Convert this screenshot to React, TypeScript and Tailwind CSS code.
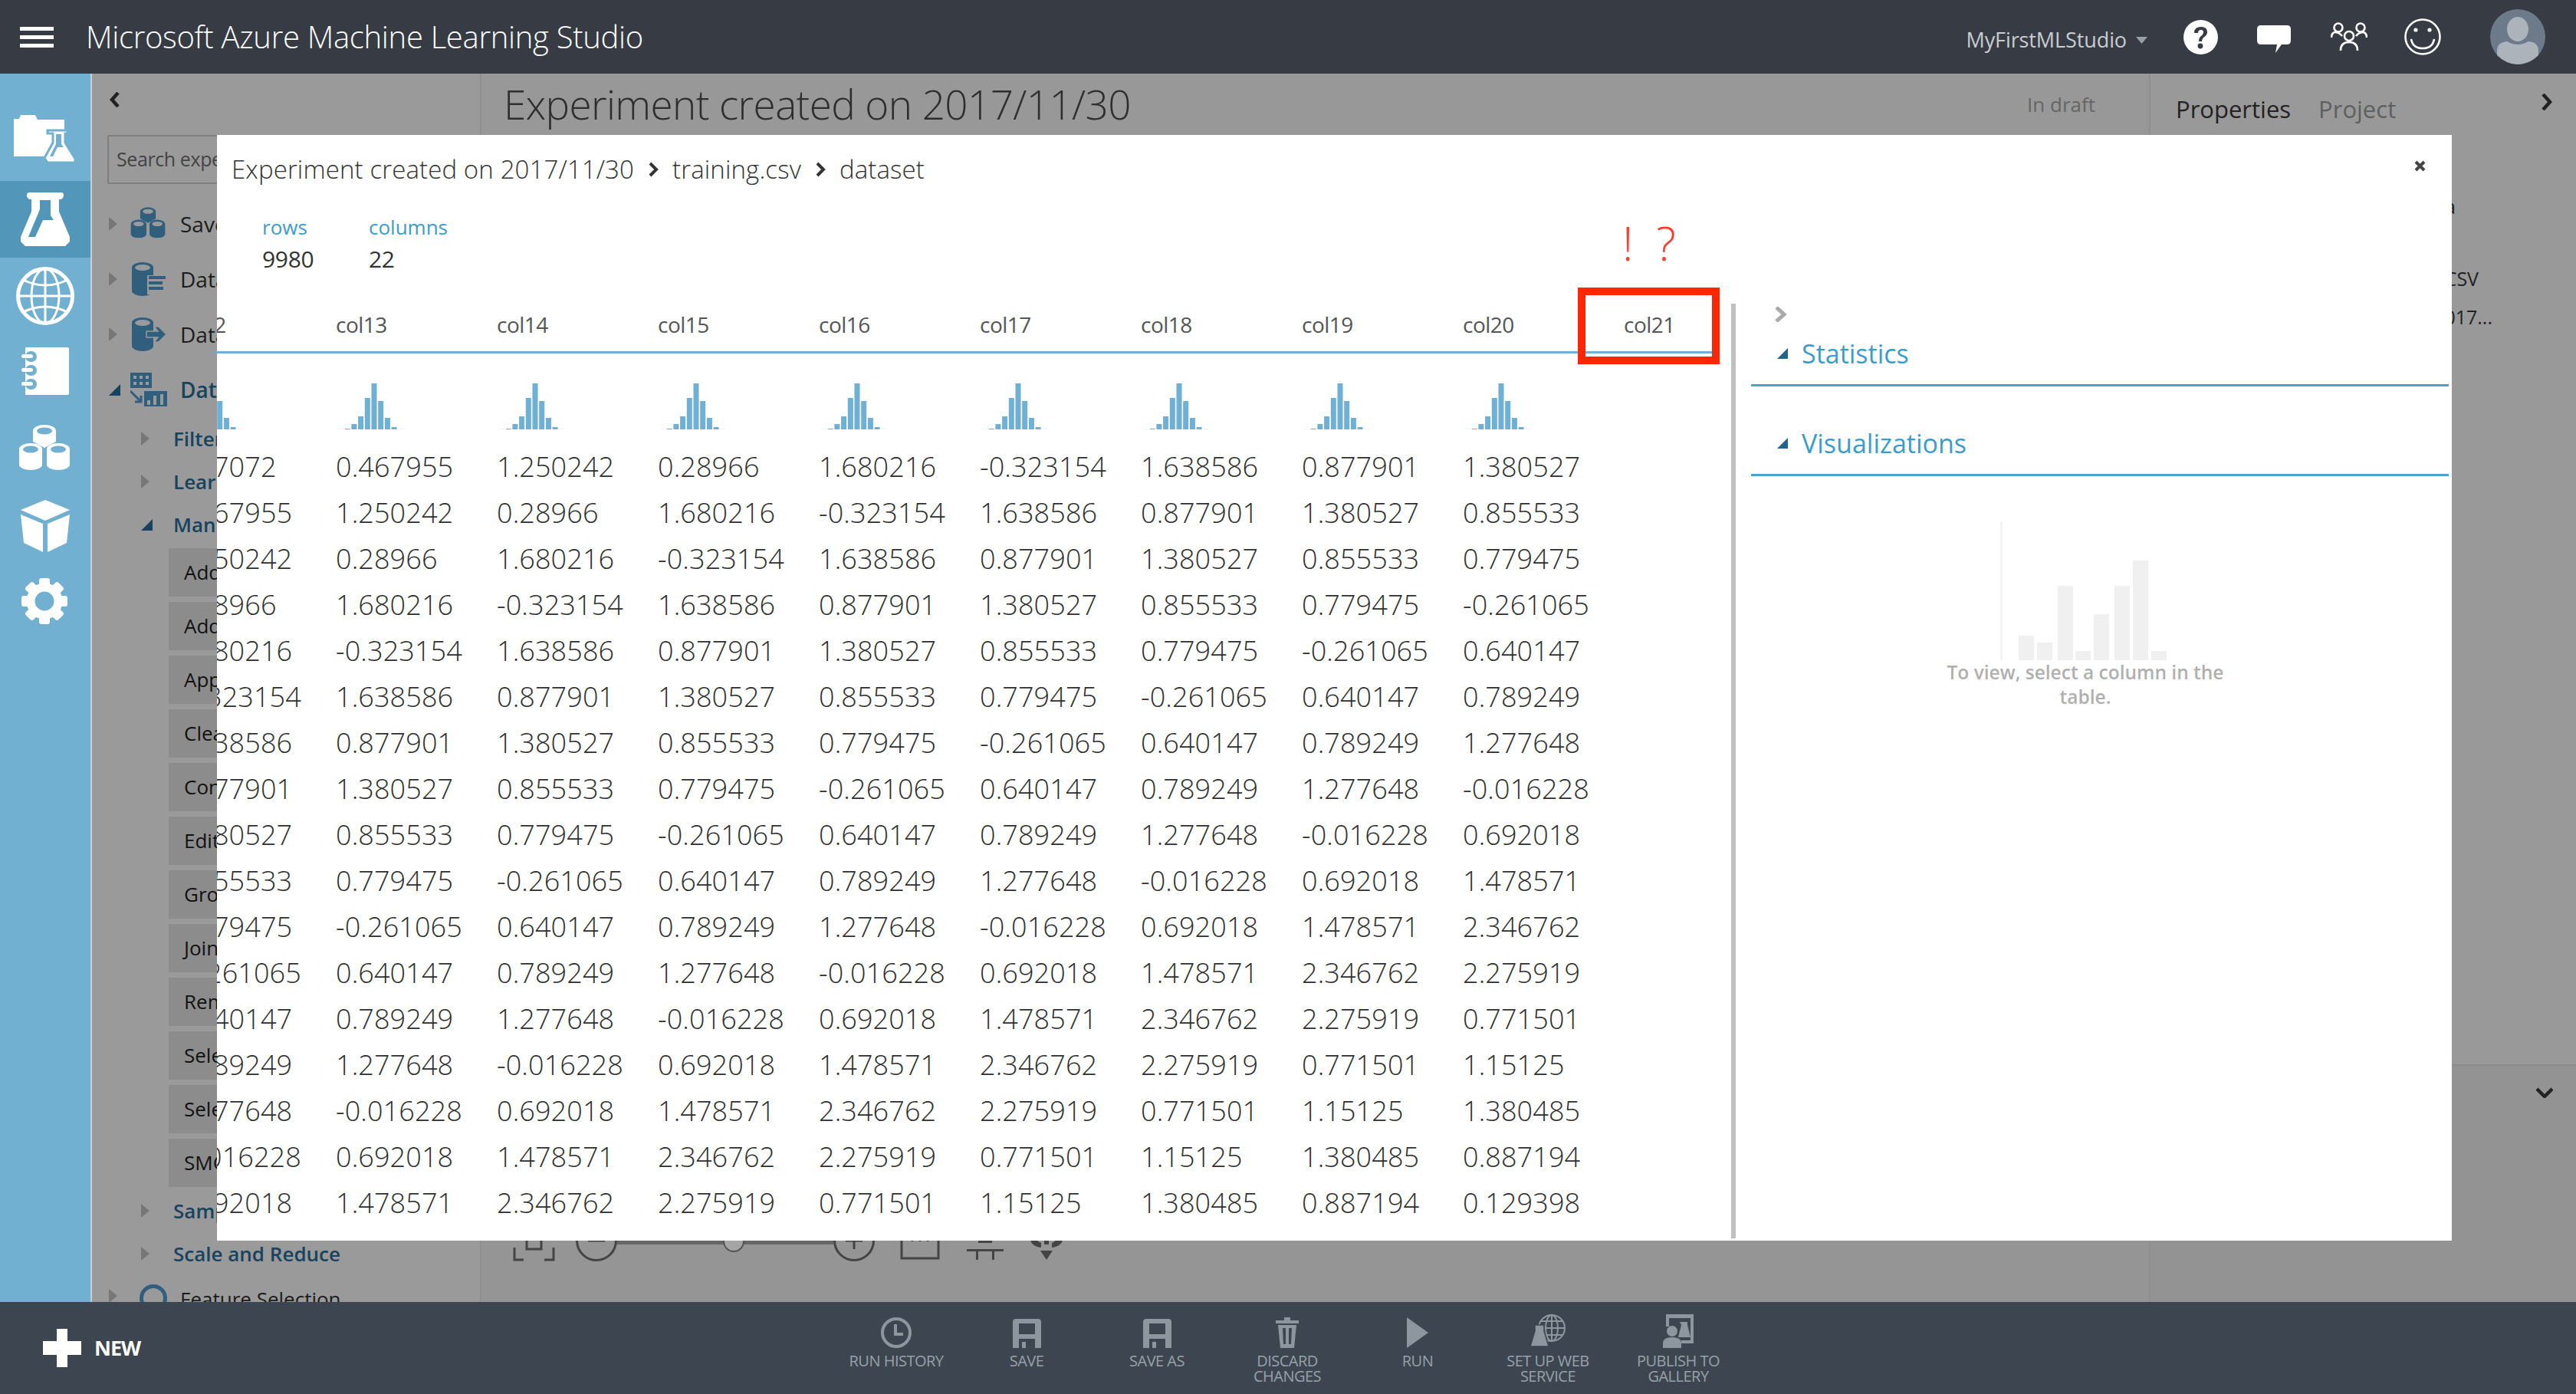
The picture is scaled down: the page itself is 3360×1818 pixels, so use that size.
import type { ReactNode } from "react";

const series = [
  "0.27072", "0.467955", "1.250242", "0.28966", "1.680216", "-0.323154", "1.638586", "0.877901", "1.380527",
  "0.855533", "0.779475", "-0.261065", "0.640147", "0.789249", "1.277648", "-0.016228", "0.692018", "1.478571",
  "2.346762", "2.275919", "0.771501", "1.15125", "1.380485", "0.887194", "0.129398",
];
const columns = ["col12", "col13", "col14", "col15", "col16", "col17", "col18", "col19", "col20"];
const rowIndexes = Array.from({ length: 17 }, (_, i) => i);
const histBars = [0.4, 1, 7, 17, 41, 60, 37, 15, 3, 0.5];
const moduleItems = [
  "Add Columns", "Add Rows", "Apply SQL Transformation", "Clean Missing Data", "Convert to Indicator Values",
  "Edit Metadata", "Group Categorical Values", "Join Data", "Remove Duplicate Rows", "Select Columns in Dataset",
  "Select Columns Transform", "SMOTE",
];

function Histogram() {
  return (
    <svg width="90" height="60" viewBox="0 0 90 60" className="block">
      {histBars.map((h, i) => (
        <rect key={i} x={i * 8.7 + 1} y={60 - h} width="7" height={h} fill={h < 1 ? "#d5e7f1" : "#6fb0d4"} />
      ))}
    </svg>
  );
}

function RightTri() {
  return (
    <svg width="11" height="18" viewBox="0 0 11 18" className="block">
      <path d="M0 0 L11 9 L0 18 Z" fill="#777" />
    </svg>
  );
}

function OpenTri({ color = "#17435e", size = 15 }: { color?: string; size?: number }) {
  return (
    <svg width={size} height={size} viewBox="0 0 15 15" className="block">
      <path d="M15 0 V15 H0 Z" fill={color} />
    </svg>
  );
}

function CylinderIcons({ fill, hole, className }: { fill: string; hole: string; className?: string }) {
  const cyl = (x: number, y: number, key: string) => (
    <g key={key}>
      <path d={`M${x} ${y} a15 8 0 0 1 30 0 v20 a15 7 0 0 1 -30 0 Z`} fill={fill} />
      <ellipse cx={x + 15} cy={y} rx="10" ry="4.5" fill={hole} />
    </g>
  );
  return (
    <svg viewBox="0 0 66 68" className={className}>
      <path d="M18 10 a15 8 0 0 1 30 0 v14 l-15 8 l-15 -8 Z" fill={fill} />
      <ellipse cx="33" cy="10" rx="10" ry="4.5" fill={hole} />
      {cyl(0, 34, "a")}
      {cyl(36, 34, "b")}
    </svg>
  );
}

function FolderFlaskIcon() {
  return (
    <svg width="80" height="62" viewBox="0 0 80 62" className="block">
      <path d="M0 5 L7 5 L9 0 L28 0 L31 6 L66 6 L66 54 L0 54 Z" fill="#fff" />
      <path d="M44 20 H70 V24 H67 V36 L80 57 V62 H44 L40 56 L51 36 V24 H44 Z" fill="#fff" stroke="#72b0d2" strokeWidth="3" />
      <path d="M55 25 H62 V38 L65 42 H57 L51 54 H47 L55 38 Z" fill="#72b0d2" />
    </svg>
  );
}

function FlaskIcon() {
  return (
    <svg width="64" height="70" viewBox="0 0 64 70" className="block">
      <path d="M11 0 H53 Q56 0 56 4 Q56 9 50 9 V25 L64 58 V64 L58 70 H6 L0 64 V58 L14 25 V9 Q8 9 8 4 Q8 0 11 0 Z" fill="#fff" />
      <path d="M25 10 H39 V30 L43 36 H29 L19 58 H10 L25 22 Z" fill="#5296ba" />
    </svg>
  );
}

function GlobeIcon() {
  return (
    <svg width="78" height="78" viewBox="0 0 78 78" fill="none" stroke="#fff" className="block">
      <circle cx="39" cy="39" r="35.5" strokeWidth="5" />
      <ellipse cx="39" cy="39" rx="18" ry="35.5" strokeWidth="3" />
      <path d="M39 4 V74 M4 39 H74" strokeWidth="3" />
      <path d="M10 18 Q39 32 68 18 M10 60 Q39 46 68 60" strokeWidth="3" />
    </svg>
  );
}

function NotebookIcon() {
  return (
    <svg width="62" height="62" viewBox="0 0 62 62" className="block">
      <path d="M5 0 H60 Q62 0 62 2 V60 Q62 62 60 62 H5 V0 Z" fill="#fff" />
      {[11, 29, 47].map((y) => (
        <g key={y}>
          <rect x="5" y={y - 6} width="15" height="14" rx="7" fill="#72b0d2" />
          <rect x="0" y={y - 2} width="15" height="5" rx="2.5" fill="#fff" />
        </g>
      ))}
    </svg>
  );
}

function CubeIcon() {
  return (
    <svg width="64" height="68" viewBox="0 0 64 68" fill="#fff" className="block">
      <path d="M32 0 L64 13 L32 27 L0 13 Z" />
      <path d="M0 19 L29 31 V68 L4 56 Z M64 19 L35 31 V68 L60 56 Z" />
    </svg>
  );
}

function GearIcon() {
  const teeth = [0, 45, 90, 135, 180, 225, 270, 315];
  return (
    <svg width="60" height="60" viewBox="0 0 60 60" className="block">
      {teeth.map((a) => (
        <rect key={a} x="23" y="0" width="14" height="14" rx="3" fill="#fff" transform={`rotate(${a} 30 30)`} />
      ))}
      <circle cx="30" cy="30" r="18" fill="none" stroke="#fff" strokeWidth="11" />
    </svg>
  );
}

function DbListIcon({ arrow }: { arrow?: boolean }) {
  return (
    <svg width="48" height="44" viewBox="0 0 48 44" className="block">
      <path d="M2 7 a14 7 0 0 1 28 0 v30 a14 7 0 0 1 -28 0 Z" fill="#2f5f7c" />
      <ellipse cx="16" cy="7" rx="10" ry="4" fill="#9a9a9a" />
      {arrow ? (
        <path d="M21 18 H36 L31 12 H37 L47 22 L37 32 H31 L36 26 H21 Z" fill="#2f5f7c" stroke="#9a9a9a" strokeWidth="1.5" />
      ) : (
        <g>
          <rect x="22" y="17" width="24" height="25" fill="#9a9a9a" />
          <rect x="24" y="18" width="22" height="4" fill="#2f5f7c" />
          <rect x="24" y="25" width="18" height="4" fill="#2f5f7c" />
          <rect x="24" y="32" width="19" height="4" fill="#2f5f7c" />
        </g>
      )}
    </svg>
  );
}

function TransformIcon() {
  return (
    <svg width="48" height="44" viewBox="0 0 48 44" className="block">
      <rect x="0" y="0" width="28" height="20" fill="#2f5f7c" />
      {[4, 12, 20].map((x) => (
        <g key={x}>
          <rect x={x} y="4" width="4" height="4" fill="#9a9a9a" />
          <rect x={x} y="12" width="4" height="4" fill="#9a9a9a" />
        </g>
      ))}
      <path d="M0 24 L14 38 M14 30 V38 H6" stroke="#2f5f7c" strokeWidth="3" fill="none" />
      <rect x="18" y="24" width="30" height="20" fill="#2f5f7c" />
      <rect x="22" y="36" width="4" height="6" fill="#9a9a9a" />
      <rect x="30" y="30" width="4" height="12" fill="#9a9a9a" />
      <rect x="39" y="28" width="4" height="14" fill="#9a9a9a" />
    </svg>
  );
}

function PaletteRow({ icon, label, strong, open }: { icon: ReactNode; label: string; strong?: boolean; open?: boolean }) {
  return (
    <div className="flex h-[72px] shrink-0 items-center pl-[22px]">
      <div className="flex w-[28px] justify-start">{open ? <OpenTri /> : <RightTri />}</div>
      <div className="flex w-[65px] justify-start">{icon}</div>
      <span className={strong ? "whitespace-nowrap text-[28px] font-semibold text-[#17435e]" : "whitespace-nowrap text-[28px] text-[#1c1c1c]"}>
        {label}
      </span>
    </div>
  );
}

function SubRow({ label, open }: { label: string; open?: boolean }) {
  return (
    <div className="flex h-[56px] shrink-0 items-center pl-[64px]">
      <div className="flex w-[42px]">{open ? <OpenTri /> : <RightTri />}</div>
      <span className="whitespace-nowrap text-[26px] font-semibold text-[#17435e]">{label}</span>
    </div>
  );
}

function ToolIcon({ label, lines, children }: { label?: string; lines?: string[]; children: ReactNode }) {
  return (
    <div className="flex w-[170px] flex-col items-center">
      <div className="flex h-[48px] w-full items-end justify-center">{children}</div>
      <div className="mt-[7px] text-center text-[20px] leading-[20px] tracking-[-0.5px] text-[#97a1a9]">
        {label ? <div>{label}</div> : null}
        {lines?.map((l) => <div key={l}>{l}</div>)}
      </div>
    </div>
  );
}

function FloppyIcon() {
  return (
    <svg width="37" height="38" viewBox="0 0 37 38" className="block">
      <path d="M4 0 H33 Q37 0 37 4 V38 H29 V26 H8 V38 H0 V4 Q0 0 4 0 Z M8 6 V20 H29 V6 Z" fill="#8d969e" fillRule="evenodd" />
      <rect x="12" y="30" width="5" height="8" fill="#8d969e" />
    </svg>
  );
}

export default function App() {
  return (
    <div className="relative flex h-[1818px] w-[3360px] flex-col overflow-hidden bg-[#999] font-['Open_Sans','Noto_Sans',sans-serif]">
      {/* top bar */}
      <header className="flex h-[96px] shrink-0 items-center bg-[#373c44]">
        <div className="ml-[26px] flex h-[27px] w-[44px] flex-col justify-between">
          <div className="h-[5px] bg-white" />
          <div className="h-[5px] bg-white" />
          <div className="h-[5px] bg-white" />
        </div>
        <span className="ml-[42px] text-[40px] font-light tracking-[-0.3px] text-white">Microsoft Azure Machine Learning Studio</span>
        <div className="ml-auto mr-[40px] flex items-center">
          <span className="mt-[8px] text-[27px] tracking-[-0.1px] text-[#c9ccd0]">MyFirstMLStudio</span>
          <svg width="15" height="9" viewBox="0 0 15 9" className="ml-[12px] mt-[8px]">
            <path d="M0 0 H15 L7.5 9 Z" fill="#9a9ea3" />
          </svg>
          <svg width="45" height="45" viewBox="0 0 45 45" className="ml-[47px]">
            <circle cx="22.5" cy="22.5" r="22.5" fill="#fff" />
            <path d="M14 17 Q14 9 23 9 Q31 9 31 16 Q31 20 26 23 Q24 25 24 28 H20 Q20 23 23 21 Q26 19 26 16 Q26 13 23 13 Q19 13 19 17 Z" fill="#373c44" />
            <circle cx="22" cy="34" r="3.4" fill="#373c44" />
          </svg>
          <svg width="44" height="36" viewBox="0 0 44 36" className="ml-[51px] mt-[6px]">
            <path d="M5 0 H39 Q44 0 44 5 V20 Q44 25 39 25 H32 L24 36 L26 25 H5 Q0 25 0 20 V5 Q0 0 5 0 Z" fill="#fff" />
          </svg>
          <svg width="48" height="38" viewBox="0 0 48 38" fill="none" stroke="#fff" strokeWidth="2.6" className="ml-[52px]">
            <circle cx="10" cy="7" r="5.5" />
            <circle cx="39" cy="7" r="5.5" />
            <circle cx="24" cy="18" r="6" />
            <path d="M1 20 Q1 13 7 13 M47 20 Q47 13 41 13 M13 37 Q13 26 24 26 Q35 26 35 37" />
            <path d="M7 13 Q12 14 15 18 M41 13 Q36 14 33 18" />
          </svg>
          <svg width="48" height="48" viewBox="0 0 48 48" fill="none" stroke="#fff" strokeWidth="2.6" className="ml-[48px]">
            <circle cx="24" cy="24" r="22.5" />
            <circle cx="15" cy="15" r="2.6" fill="#fff" stroke="none" />
            <circle cx="33" cy="15" r="2.6" fill="#fff" stroke="none" />
            <path d="M9 27 Q11 39 24 39 Q37 39 39 27" />
          </svg>
          <svg width="72" height="72" viewBox="0 0 72 72" className="ml-[64px]">
            <circle cx="36" cy="36" r="36" fill="#6c7a8a" />
            <ellipse cx="36" cy="26" rx="14" ry="16" fill="#adb3bb" />
            <path d="M9 60 V54 Q9 43 22 42 Q36 50 50 42 Q63 43 63 54 V60 Q50 72 36 72 Q22 72 9 60 Z" fill="#adb3bb" />
          </svg>
        </div>
      </header>

      <div className="flex min-h-0 flex-1">
        {/* left nav */}
        <nav className="flex w-[120px] shrink-0 flex-col border-r-[2px] border-[#c9d0d4] bg-[#72b0d2] pt-[40px]">
          <div className="flex h-[100px] items-center justify-center pb-[10px] pr-[3px]"><FolderFlaskIcon /></div>
          <div className="flex h-[100px] items-center justify-center bg-[#5296ba]"><FlaskIcon /></div>
          <div className="flex h-[100px] items-center justify-center"><GlobeIcon /></div>
          <div className="flex h-[100px] items-center justify-center pb-[4px]"><NotebookIcon /></div>
          <div className="flex h-[100px] items-center justify-center pr-[2px]"><CylinderIcons fill="#fff" hole="#72b0d2" className="block h-[68px] w-[66px]" /></div>
          <div className="flex h-[100px] items-center justify-center"><CubeIcon /></div>
          <div className="flex h-[100px] items-center justify-center pb-[4px] pr-[2px]"><GearIcon /></div>
        </nav>

        {/* module palette */}
        <aside className="flex w-[508px] shrink-0 flex-col overflow-hidden border-r-[2px] border-[#8f8f8f] bg-[#9a9a9a]">
          <div className="flex h-[80px] shrink-0 items-start pl-[23px] pt-[24px]">
            <svg width="13" height="20" viewBox="0 0 13 20" fill="none" stroke="#222" strokeWidth="4.5">
              <path d="M11 1 L3 10 L11 19" />
            </svg>
          </div>
          <div className="ml-[20px] flex h-[64px] w-[470px] shrink-0 items-center border-[2px] border-[#808080] pl-[10px] text-[25px] tracking-[-0.4px] text-[#444]">
            Search experiment items
          </div>
          <div className="h-[16px] shrink-0" />
          <PaletteRow icon={<CylinderIcons fill="#2f5f7c" hole="#9a9a9a" className="block h-[46px] w-[46px]" />} label="Saved Datasets" />
          <PaletteRow icon={<DbListIcon />} label="Data Format Conversions" />
          <PaletteRow icon={<DbListIcon arrow />} label="Data Input and Output" />
          <PaletteRow icon={<TransformIcon />} label="Data Transformation" strong open />
          <SubRow label="Filter" />
          <SubRow label="Learning with Counts" />
          <SubRow label="Manipulation" open />
          <div className="ml-[100px] mt-[3px] flex shrink-0 flex-col gap-[7px]">
            {moduleItems.map((m) => (
              <div key={m} className="flex h-[63px] items-center bg-[#8c8c8c] pl-[20px] text-[26px] text-[#111]">{m}</div>
            ))}
          </div>
          <div className="mt-[3px]">
            <SubRow label="Sample and Split" />
            <SubRow label="Scale and Reduce" />
          </div>
          <div className="flex h-[70px] shrink-0 items-start pl-[22px] pt-[12px]">
            <div className="mt-[6px] w-[40px]"><RightTri /></div>
            <div className="h-[36px] w-[36px] rounded-full border-[5px] border-[#2f5f7c]" />
            <span className="ml-[17px] text-[26px] text-[#1c1c1c]">Feature Selection</span>
          </div>
        </aside>

        {/* canvas */}
        <main className="flex min-w-0 flex-1 flex-col bg-[#959595]">
          <div className="flex h-[80px] shrink-0 items-center bg-[#989898] pl-[29px] pr-[70px]">
            <span className="text-[53px] font-light tracking-[-0.6px] text-[#2e2e2e]">Experiment created on 2017/11/30</span>
            <span className="ml-auto text-[26px] text-[#666]">In draft</span>
          </div>
          <div className="mb-[53px] mt-auto flex h-[54px] items-center pl-[41px]">
            <svg width="55" height="54" viewBox="0 0 55 54" fill="none" stroke="#444" strokeWidth="3">
              <path d="M2 36 V52 H14 M53 36 V52 H41" />
              <rect x="18" y="14" width="19" height="24" />
            </svg>
            <svg width="54" height="54" viewBox="0 0 54 54" fill="none" stroke="#444" strokeWidth="3" className="ml-[27px]">
              <circle cx="27" cy="27" r="25.5" />
              <path d="M16 27 H38" />
            </svg>
            <div className="relative h-[10px] w-[282px] bg-[#666]">
              <div className="absolute left-[138px] top-[-12px] h-[32px] w-[28px] rounded-b-full border-[2px] border-[#555] bg-[#a5a5a5]" />
            </div>
            <svg width="54" height="54" viewBox="0 0 54 54" fill="none" stroke="#444" strokeWidth="3">
              <circle cx="27" cy="27" r="25.5" />
              <path d="M16 27 H38 M27 16 V38" />
            </svg>
            <svg width="52" height="50" viewBox="0 0 52 50" fill="none" stroke="#444" strokeWidth="3" className="ml-[33px]">
              <rect x="2" y="2" width="48" height="46" />
              <path d="M16 14 V26 M26 14 V26 M36 14 V26" />
            </svg>
            <svg width="48" height="50" viewBox="0 0 48 50" fill="#444" className="ml-[35px]">
              <rect x="15" y="8" width="18" height="20" />
              <path d="M0 36 H48 V39 H36 V50 H33 V39 H15 V50 H12 V39 H0 Z" />
            </svg>
            <svg width="46" height="50" viewBox="0 0 46 50" fill="#444" className="ml-[33px]">
              <path d="M23 6 Q44 6 44 22 Q44 32 30 34 V28 Q36 26 36 20 Q36 14 23 14 Q10 14 10 20 Q10 26 16 28 V34 Q2 32 2 22 Q2 6 23 6 Z" />
              <path d="M15 38 H31 L23 50 Z" />
              <rect x="20" y="14" width="6" height="16" />
            </svg>
          </div>
        </main>

        {/* properties */}
        <aside className="flex w-[557px] shrink-0 flex-col border-l-[2px] border-[#8f8f8f] bg-[#999]">
          <div className="flex h-[80px] shrink-0 items-center pl-[33px]">
            <span className="mt-[12px] text-[31px] text-[#222]">Properties</span>
            <span className="ml-[36px] mt-[12px] text-[31px] text-[#5f5f5f]">Project</span>
            <svg width="14" height="22" viewBox="0 0 14 22" fill="none" stroke="#222" strokeWidth="4.5" className="ml-auto mr-[31px] -mt-[6px]">
              <path d="M2 1 L11 11 L2 21" />
            </svg>
          </div>
          <div className="mt-[76px] h-[34px] whitespace-nowrap pr-[157px] text-right text-[25px] leading-[34px] text-[#222]">Summary data</div>
          <div className="mt-[60px] h-[34px] whitespace-nowrap pr-[127px] text-right text-[25px] leading-[34px] text-[#222]">training.CSV</div>
          <div className="mt-[16px] h-[34px] whitespace-nowrap pr-[109px] text-right text-[25px] leading-[34px] text-[#222]">2017/11/30 2017...</div>
          <div className="mt-[958px] flex flex-1 justify-end border-t-[2px] border-[#8c8c8c] bg-[#939393] pr-[30px] pt-[28px]">
            <svg width="22" height="14" viewBox="0 0 22 14" fill="none" stroke="#222" strokeWidth="4.5">
              <path d="M1 2 L11 12 L21 2" />
            </svg>
          </div>
        </aside>
      </div>

      {/* bottom bar */}
      <footer className="flex h-[120px] shrink-0 bg-[#3d4650]">
        <div className="flex w-[1084px] shrink-0 items-center pl-[56px]">
          <svg width="50" height="50" viewBox="0 0 50 50" fill="#fff">
            <path d="M18 0 H32 V16 H50 V34 H32 V50 H18 V34 H0 V16 H18 Z" />
          </svg>
          <span className="ml-[17px] text-[27px] font-bold tracking-[-1px] text-white">NEW</span>
        </div>
        <div className="flex pt-[12px]">
          <ToolIcon label="RUN HISTORY">
            <svg width="40" height="40" viewBox="0 0 40 40" fill="none" stroke="#8d969e">
              <circle cx="20" cy="20" r="18" strokeWidth="4" />
              <path d="M19 9 V22 H29" strokeWidth="4" />
            </svg>
          </ToolIcon>
          <ToolIcon label="SAVE"><FloppyIcon /></ToolIcon>
          <ToolIcon label="SAVE AS"><FloppyIcon /></ToolIcon>
          <ToolIcon lines={["DISCARD", "CHANGES"]}>
            <svg width="30" height="40" viewBox="0 0 30 40" fill="#8d969e">
              <rect x="11" y="0" width="8" height="4" />
              <rect x="0" y="4" width="30" height="4" />
              <path d="M3 10 H27 L24 40 H6 Z M9 14 L10 35 H13 V14 Z M17 14 V35 H20 L21 14 Z" fillRule="evenodd" />
            </svg>
          </ToolIcon>
          <ToolIcon label="RUN">
            <svg width="28" height="40" viewBox="0 0 28 40" fill="#8d969e"><path d="M0 0 L28 20 L0 40 Z" /></svg>
          </ToolIcon>
          <ToolIcon lines={["SET UP WEB", "SERVICE"]}>
            <svg width="46" height="44" viewBox="0 0 46 44" fill="none" stroke="#8d969e" strokeWidth="2">
              <circle cx="28" cy="18" r="17" />
              <ellipse cx="28" cy="18" rx="8" ry="17" />
              <path d="M28 1 V35 M11 18 H45 M14 9 H42 M14 27 H42" />
              <path d="M4 14 H18 V22 L24 42 H0 L6 22 V14 Z" fill="#8d969e" stroke="#3d4650" strokeWidth="1.5" />
            </svg>
          </ToolIcon>
          <ToolIcon lines={["PUBLISH TO", "GALLERY"]}>
            <svg width="40" height="44" viewBox="0 0 40 44" fill="#8d969e">
              <path d="M4 0 H40 V38 H24 V34 H36 V5 H8 V16 H4 Z" />
              <path d="M22 10 H32 V14 L36 30 H20 L24 14 Z" />
              <circle cx="12" cy="22" r="7" />
              <path d="M0 44 V38 Q0 30 12 30 Q24 30 24 38 V44 Z" />
            </svg>
          </ToolIcon>
        </div>
      </footer>

      {/* dataset dialog */}
      <div className="absolute left-[283px] top-[176px] flex h-[1442px] w-[2915px] flex-col bg-white text-[#333]">
        <div className="flex h-[90px] shrink-0 items-center pl-[19px] pr-[34px] text-[33px] font-light tracking-[0.12px]">
          <span>Experiment created on 2017/11/30</span>
          <svg width="13" height="20" viewBox="0 0 13 20" fill="none" stroke="#333" strokeWidth="4" className="ml-[19px] mr-[18px]">
            <path d="M2 2 L10 10 L2 18" />
          </svg>
          <span>training.csv</span>
          <svg width="13" height="20" viewBox="0 0 13 20" fill="none" stroke="#333" strokeWidth="4" className="ml-[19px] mr-[18px]">
            <path d="M2 2 L10 10 L2 18" />
          </svg>
          <span>dataset</span>
          <svg width="15" height="15" viewBox="0 0 15 15" fill="none" stroke="#444" strokeWidth="4" className="ml-auto -mt-[10px]">
            <path d="M2 2 L13 13 M13 2 L2 13" />
          </svg>
        </div>
        <div className="flex h-[94px] shrink-0 pl-[59px] pt-[8px]">
          <div className="w-[139px]">
            <div className="h-[44px] text-[26px] leading-[44px] text-[#3b9ccb]">rows</div>
            <div className="h-[42px] text-[30px] leading-[40px] tracking-[-0.3px] text-[#333]">9980</div>
          </div>
          <div>
            <div className="h-[44px] text-[26px] leading-[44px] text-[#3b9ccb]">columns</div>
            <div className="h-[42px] text-[30px] leading-[40px] tracking-[-0.3px] text-[#333]">22</div>
          </div>
        </div>
        <div className="flex min-h-0 flex-1">
          {/* table */}
          <div className="w-[1975px] shrink-0 overflow-hidden">
            <div className="-ml-[65px] w-[2025px]">
              <div className="flex h-[101px] border-b-[3px] border-[#6fb0d4] pt-[46px]">
                {columns.map((c) => (
                  <div key={c} className="w-[210px] shrink-0 pl-[10px] text-[28px] leading-[34px] tracking-[-0.5px] text-[#555]">{c}</div>
                ))}
                <div className="w-[135px] shrink-0 pl-[10px] text-[28px] leading-[34px] tracking-[-0.5px] text-[#555]">col21</div>
              </div>
              <div className="flex h-[118px] pt-[39px]">
                {columns.map((c) => (
                  <div key={c} className="w-[210px] shrink-0 pl-[12px]"><Histogram /></div>
                ))}
              </div>
              {rowIndexes.map((r) => (
                <div key={r} className="flex h-[60px] items-center">
                  {columns.map((c, i) => (
                    <div key={c} className="w-[210px] shrink-0 pl-[10px] text-[36px] font-light tracking-[0.1px] text-[#2e2e2e]">{series[r + i]}</div>
                  ))}
                </div>
              ))}
            </div>
          </div>
          <div className="mb-[3px] mt-[36px] w-[6px] shrink-0 bg-[#c0c0c0]" />
          {/* side panel */}
          <div className="flex min-w-0 flex-1 flex-col pl-[20px] pr-[4px]">
            <div className="h-[61px] shrink-0 pl-[31px] pt-[40px]">
              <svg width="15" height="20" viewBox="0 0 15 20" fill="none" stroke="#aaa" strokeWidth="5">
                <path d="M2 1 L12 10 L2 19" />
              </svg>
            </div>
            <div className="flex h-[83px] shrink-0 items-center border-b-[3px] border-[#45a5cf] pl-[34px]">
              <OpenTri color="#22658c" size={14} />
              <span className="ml-[18px] text-[34px] text-[#3b9ccb]">Statistics</span>
            </div>
            <div className="mt-[34px] flex h-[83px] shrink-0 items-center border-b-[3px] border-[#45a5cf] pl-[34px]">
              <OpenTri color="#22658c" size={14} />
              <span className="ml-[18px] text-[34px] text-[#3b9ccb]">Visualizations</span>
            </div>
            <div className="ml-[226px] mt-[60px] flex w-[420px] flex-col items-center">
              <svg width="222" height="180" viewBox="0 0 222 180" className="block">
                <rect x="0" y="0" width="3" height="180" fill="#f3f3f3" />
                {[[24, 32], [48, 23], [75, 97], [98, 12], [122, 60], [149, 97], [173, 130], [197, 12]].map(([x, h]) => (
                  <rect key={x} x={x} y={180 - h} width="20" height={h} fill="#f0f0f0" />
                ))}
              </svg>
              <div className="w-[390px] text-center text-[24.5px] font-semibold leading-[32px] text-[#b0b0b0]">
                To view, select a column in the table.
              </div>
            </div>
          </div>
        </div>

        {/* hand-drawn annotation on top of the screenshot */}
        <div className="absolute left-[1833px] top-[106px] flex items-start text-[60px] font-light leading-[70px] text-[#ff3b30]">
          <span>!</span>
          <span className="ml-[30px]">?</span>
        </div>
        <div className="absolute left-[1775px] top-[199px] h-[100px] w-[185px] border-[10px] border-[#ff2600]" />
      </div>
    </div>
  );
}
